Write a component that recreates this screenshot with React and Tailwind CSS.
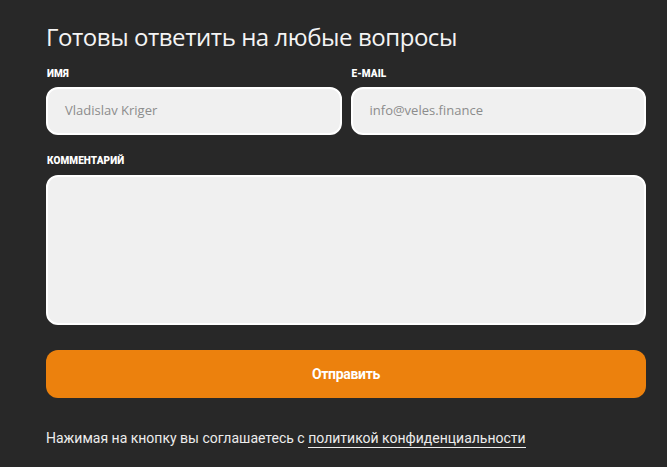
export default function App() {
  return (
    <div className="w-[667px] h-[467px] bg-[#282828] overflow-hidden" style={{ fontFamily: "Roboto, 'Noto Sans', sans-serif" }}>
      <div className="pl-[46px] pr-[21px] pt-[21px]">
        <h1 className="text-[24px] leading-[32px] text-[#f4f4f4] font-normal tracking-[-0.45px]" style={{ fontFamily: "'Open Sans', 'Noto Sans', sans-serif" }}>
          Готовы ответить на любые вопросы
        </h1>
        <div className="mt-[15px] grid grid-cols-2 gap-[9px]">
          <div>
            <div className="text-[10px] leading-[12px] font-black text-white tracking-[0.1px] ml-[1px]">ИМЯ</div>
            <div className="mt-[7px] h-[48px] rounded-[12px] bg-[#f0f0f0] border-2 border-white flex items-center pl-[17px] text-[13px] text-[#8c8c8c]" style={{ fontFamily: "'Open Sans', sans-serif" }}>
              Vladislav Kriger
            </div>
          </div>
          <div>
            <div className="text-[10px] leading-[12px] font-black text-white tracking-[0.1px] ml-[1px]">E-MAIL</div>
            <div className="mt-[7px] h-[48px] rounded-[12px] bg-[#f0f0f0] border-2 border-white flex items-center pl-[17px] text-[13px] text-[#8c8c8c]" style={{ fontFamily: "'Open Sans', sans-serif" }}>
              info@veles.finance
            </div>
          </div>
        </div>
        <div className="mt-[20px] text-[10px] leading-[12px] font-black text-white tracking-[0.1px] ml-[1px]">КОММЕНТАРИЙ</div>
        <div className="mt-[8px] h-[150px] rounded-[12px] bg-[#f0f0f0] border-2 border-white"></div>
        <button className="mt-[25px] w-full h-[48px] rounded-[12px] bg-[#ec810d] text-white font-bold text-[14px] flex items-center justify-center tracking-[-0.3px]">
          Отправить
        </button>
        <p className="mt-[30px] text-[14px] leading-[20px] text-[#ececec]">
          Нажимая на кнопку вы соглашаетесь с{" "}
          <span className="border-b border-[#ececec] pb-[1px]">политикой конфиденциальности</span>
        </p>
      </div>
    </div>
  );
}
